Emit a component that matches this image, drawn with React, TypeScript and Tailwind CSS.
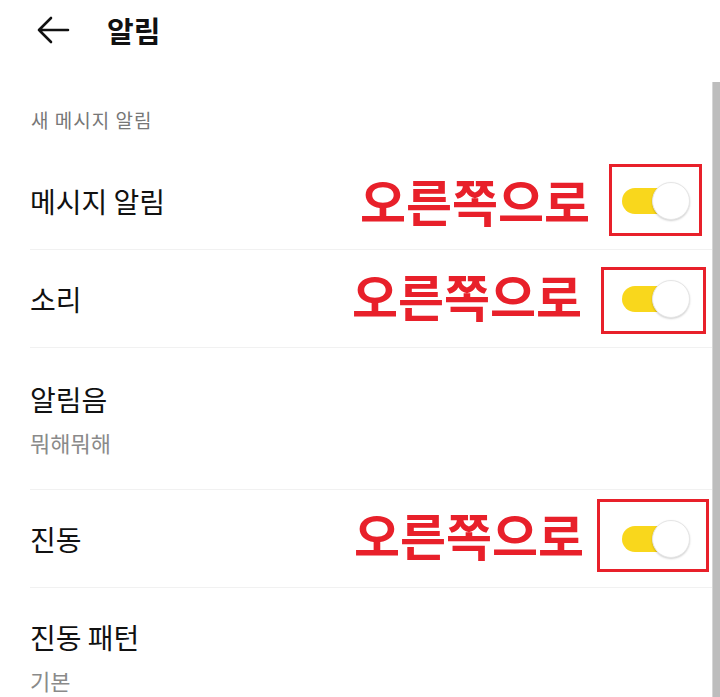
import { ReactNode } from "react";

const KR = { fontFamily: '"Noto Sans CJK KR", "Noto Sans", sans-serif' };

function Toggle() {
  return (
    <div className="relative h-[38px] w-[68px]">
      <div className="absolute left-0 top-[6px] h-[26px] w-[56px] rounded-full bg-[#f9d71c]" />
      <div className="absolute right-0 top-0 h-[38px] w-[38px] rounded-full border border-[#e6e6e6] bg-white shadow-[0_1px_2px_rgba(0,0,0,0.18)]" />
    </div>
  );
}

// red annotation + boxed toggle
function Marked({ box, text }: { box: string; text: string }) {
  return (
    <div className="relative">
      <span
        className={`absolute whitespace-nowrap text-[50px] font-bold leading-none text-[#e8202a] ${text}`}
        style={KR}
      >
        오른쪽으로
      </span>
      <Toggle />
      <div className={`absolute border-[3px] border-[#e8202a] ${box}`} />
    </div>
  );
}

function Row({
  title,
  sub,
  right,
  last,
  h,
}: {
  title: string;
  sub?: string;
  right?: ReactNode;
  last?: boolean;
  h: string;
}) {
  return (
    <div
      className={`flex items-center justify-between pr-[30px] ${h} ${
        last ? "" : "border-b border-[#f1f1f1]"
      }`}
    >
      <div>
        <div className="text-[28px] leading-[34px] text-[#111]">{title}</div>
        {sub && (
          <div className="mt-[12px] text-[22px] leading-[28px] text-[#8a8a8a]">{sub}</div>
        )}
      </div>
      {right}
    </div>
  );
}

export default function App() {
  return (
    <div className="relative h-[697px] w-[720px] overflow-hidden bg-white" style={KR}>
      {/* Header */}
      <div className="flex h-[60px] items-center pl-[36px]">
        <svg width="34" height="30" viewBox="0 0 34 30" fill="none">
          <path
            d="M32 15H3M15 3L3 15l12 12"
            stroke="#111"
            strokeWidth="2.6"
            strokeLinecap="round"
            strokeLinejoin="round"
          />
        </svg>
        <h1 className="ml-[37px] text-[29px] font-bold leading-none text-[#111]">알림</h1>
      </div>

      <div className="ml-[30px]">
        <div className="mt-[48px] pl-[1px] text-[19px] leading-[24px] tracking-[1px] text-[#777]">
          새 메시지 알림
        </div>

        <div className="mt-[20px]">
          <Row
            h="h-[98px]"
            title="메시지 알림"
            right={
              <Marked
                text="right-[100px] top-[-7px]"
                box="left-[-13px] top-[-18px] h-[72px] w-[93px]"
              />
            }
          />
          <Row
            h="h-[98px]"
            title="소리"
            right={
              <Marked
                text="right-[108px] top-[-10px]"
                box="left-[-21px] top-[-13px] h-[67px] w-[105px]"
              />
            }
          />
          <Row h="h-[142px]" title="알림음" sub="뭐해뭐해" />
          <Row
            h="h-[98px]"
            title="진동"
            right={
              <Marked
                text="right-[106px] top-[-11px]"
                box="left-[-25px] top-[-21px] h-[73px] w-[112px]"
              />
            }
          />
          <Row h="h-[138px]" title="진동 패턴" sub="기본" last />
        </div>
      </div>

      {/* scroll indicator */}
      <div className="absolute bottom-0 right-0 top-[82px] w-[8px] border-l border-[#d6d6d6] bg-[#bdbdbd]" />
    </div>
  );
}
